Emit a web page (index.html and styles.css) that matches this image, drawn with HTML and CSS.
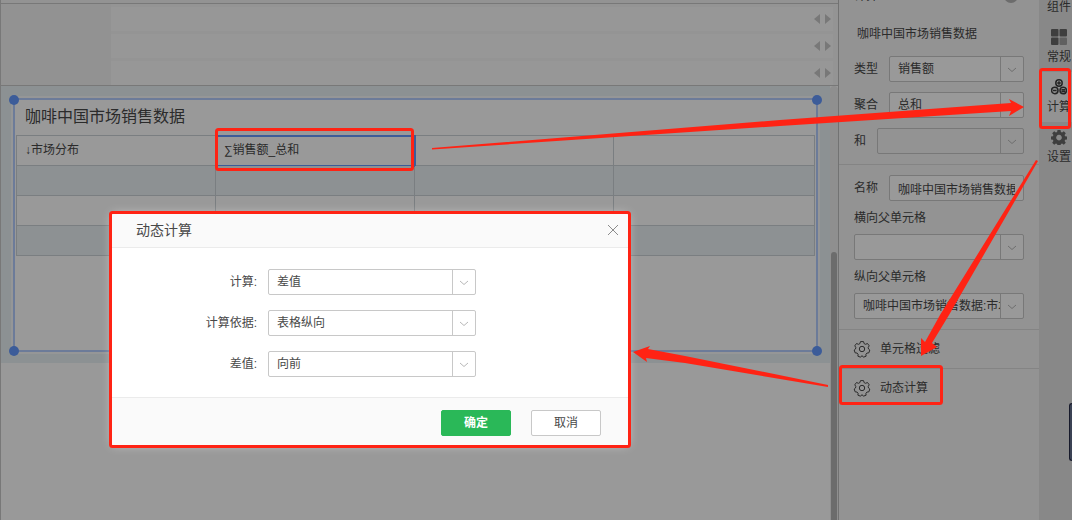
FILE: index.html
```
<!DOCTYPE html>
<html lang="zh-CN">
<head>
  <meta charset="UTF-8" />
  <meta name="viewport" content="width=device-width, initial-scale=1" />
  <title>动态计算</title>
  <link rel="stylesheet" href="styles.css">
</head>

<body>
  <div class="app">
    <!-- ===== DESIGN AREA ===== -->
    <main class="main">
      <div class="toolbar"></div>

      <div class="shelf">
        <div class="shelf-side"></div>
        <div class="shelf-rows">
          <div class="shelf-row"><i class="arrow-left"></i><i class="arrow-right"></i></div>
          <div class="shelf-row"><i class="arrow-left"></i><i class="arrow-right"></i></div>
          <div class="shelf-row"><i class="arrow-left"></i><i class="arrow-right"></i></div>
        </div>
      </div>

      <div class="canvas">
        <div class="sheet">
          <div class="widget">
            <i class="handle top left"></i>
            <i class="handle top right"></i>
            <i class="handle bottom left"></i>
            <i class="handle bottom right"></i>
            <div class="widget-title">咖啡中国市场销售数据</div>
            <table class="grid">
              <tr><td>↓市场分布</td><td class="selected">∑销售额_总和</td><td></td><td></td></tr>
              <tr><td></td><td></td><td></td><td></td></tr>
              <tr><td></td><td></td><td></td><td></td></tr>
              <tr><td></td><td></td><td></td><td></td></tr>
            </table>
          </div>
        </div>
        <div class="scrollbar"><div class="scroll-thumb"></div></div>
      </div>
    </main>

    <!-- ===== PROPERTY PANEL ===== -->
    <aside class="panel">
      <div class="panel-header"><span>计算</span><i class="help-dot"></i></div>

      <section class="panel-section">
        <div class="panel-name">咖啡中国市场销售数据</div>
        <div class="field">
          <label for="type">类型</label>
          <div class="select"><select id="type"><option>销售额</option></select><svg viewBox="0 0 10 6"><path d="M1 1l4 3.5L9 1" /></svg></div>
        </div>
        <div class="field">
          <label for="agg">聚合</label>
          <div class="select"><select id="agg"><option>总和</option></select><svg viewBox="0 0 10 6"><path d="M1 1l4 3.5L9 1" /></svg></div>
        </div>
        <div class="field">
          <label for="with">和</label>
          <div class="select disabled"><select id="with" disabled><option></option></select><svg viewBox="0 0 10 6"><path d="M1 1l4 3.5L9 1" /></svg></div>
        </div>
      </section>

      <section class="panel-section">
        <div class="field">
          <label for="name">名称</label>
          <input class="text-input" id="name" type="text" value="咖啡中国市场销售数据_1">
        </div>
        <div class="field-stack">
          <label for="hparent">横向父单元格</label>
          <div class="select"><select id="hparent"><option></option></select><svg viewBox="0 0 10 6"><path d="M1 1l4 3.5L9 1" /></svg></div>
        </div>
        <div class="field-stack">
          <label for="vparent">纵向父单元格</label>
          <div class="select"><select id="vparent"><option>咖啡中国市场销售数据:市场分布</option></select><svg viewBox="0 0 10 6"><path d="M1 1l4 3.5L9 1" /></svg></div>
        </div>
      </section>

      <button class="panel-link" type="button">
        <svg viewBox="0 0 16 16"><path d="M6.500 .6h3l.7 2.100 1.300.6 2-.8 1.700 2.300-1 1.700.3 1.500 1.300 1-.9 2.800-2 .3-1 1.100.2 2-2.700 1L8 14.600l-1.400 1.600-2.700-1 .2-2-1-1.100-2-.3L.2 9l1.300-1 .3-1.500-1-1.700 1.700-2.300 2 .8 1.300-.6z" /><circle cx="8" cy="8" r="2.700" /></svg>
        单元格过滤
      </button>
      <button class="panel-link" type="button">
        <svg viewBox="0 0 16 16"><path d="M6.500 .6h3l.7 2.100 1.300.6 2-.8 1.700 2.300-1 1.700.3 1.500 1.300 1-.9 2.800-2 .3-1 1.100.2 2-2.700 1L8 14.600l-1.400 1.600-2.700-1 .2-2-1-1.100-2-.3L.2 9l1.300-1 .3-1.500-1-1.700 1.700-2.300 2 .8 1.300-.6z" /><circle cx="8" cy="8" r="2.700" /></svg>
        动态计算
      </button>
    </aside>

    <!-- ===== TAB RAIL ===== -->
    <nav class="rail">
      <button class="rail-tab" type="button">
        <svg viewBox="0 0 16 16"><rect x="1" y="1" width="14" height="14" /></svg>
        组件
      </button>
      <button class="rail-tab" type="button">
        <svg viewBox="0 0 16 16"><rect x="0" y="0" width="7.500" height="7.500" rx="1" /><rect x="8.500" y="0" width="7.500" height="7.500" rx="1" /><rect x="0" y="8.500" width="7.500" height="7.500" rx="1" /><rect class="faint" x="8.500" y="8.500" width="7.500" height="7.500" rx="1" /></svg>
        常规
      </button>
      <button class="rail-tab active" type="button">
        <svg viewBox="0 0 16 16"><circle cx="8" cy="4" r="3.200" /><circle cx="3.800" cy="11.500" r="3.200" /><circle cx="12.200" cy="11.500" r="3.200" /><path d="M6.200 4h3.600M8 2.200v3.600M2 11.500h3.600M10.400 10.700h3.600M10.400 12.500h3.600" /></svg>
        计算
      </button>
      <button class="rail-tab" type="button">
        <svg viewBox="0 0 16 16"><path fill-rule="evenodd" d="M6.500 1h3l.4 2 1.200.5 1.700-1.200 2 2-1.200 1.700.5 1.200 1.900.3v2.900l-1.900.4-.5 1.200 1.200 1.700-2 2-1.700-1.200-1.200.5-.4 2h-3l-.4-2-1.200-.5-1.700 1.200-2-2 1.200-1.700-.5-1.200L0 10.400V7.500l1.900-.3.500-1.200L1.200 4.300l2-2 1.700 1.200L6.100 3zM8 5.800a2.800 2.800 0 1 0 .01 0z" /></svg>
        设置
      </button>
    </nav>

    <div class="scrim"></div>
    <div class="dock-tab"></div>

    <!-- ===== DIALOG ===== -->
    <form class="dialog" role="dialog" aria-labelledby="dialogTitle">
      <div class="dialog-header">
        <span id="dialogTitle">动态计算</span>
        <button class="dialog-close" type="button" aria-label="关闭">
          <svg viewBox="0 0 12 12"><path d="M1 1l10 10M11 1L1 11" /></svg>
        </button>
      </div>
      <div class="dialog-body">
        <div class="dialog-row">
          <label for="calc">计算:</label>
          <div class="select"><select id="calc"><option>差值</option></select><svg viewBox="0 0 10 6"><path d="M1 1l4 3.5L9 1" /></svg></div>
        </div>
        <div class="dialog-row">
          <label for="basis">计算依据:</label>
          <div class="select"><select id="basis"><option>表格纵向</option></select><svg viewBox="0 0 10 6"><path d="M1 1l4 3.5L9 1" /></svg></div>
        </div>
        <div class="dialog-row">
          <label for="diff">差值:</label>
          <div class="select"><select id="diff"><option>向前</option></select><svg viewBox="0 0 10 6"><path d="M1 1l4 3.5L9 1" /></svg></div>
        </div>
      </div>
      <div class="dialog-footer">
        <button class="btn primary" type="button">确定</button>
        <button class="btn" type="button">取消</button>
      </div>
    </form>

    <!-- red callouts -->
    <svg class="marks" width="1072" height="520" viewBox="0 0 1072 520">
      <rect x="216.500" y="129.500" width="196" height="40" rx="2" />
      <rect x="110.500" y="212.500" width="519" height="234" rx="2" />
      <rect x="1040.500" y="69.500" width="29" height="58" rx="2" />
      <rect x="840.500" y="366.500" width="101" height="37" rx="2" />
      <path d="M432 148L780 120L1011 103L1009 99L1024 107L1009 116L1011 111L780 126L432 149.500Z" />
      <path d="M1036 160L1038 161L949 315L932 343L937 347L921 356L921 338L925 342L940 315Z" />
      <path d="M828 385L685 356L648 349L650 346L633 352L647 362L646 358L685 363L828 387Z" />
    </svg>
  </div>
</body>
</html>
```
FILE: styles.css
```
:root {
  --text: #484848;
  --line: #c8c8c8;
  --red: #ff2314;
  --blue: #6499ff;
  --green: #2ab858;
}

/* reset + base */
* {
  margin: 0;
  padding: 0;
  box-sizing: border-box;
}
body {
  font-family: "Liberation Sans", "Noto Sans CJK SC", sans-serif;
  font-size: 12px;
  line-height: 16px;
  color: var(--text);
}
button,
input,
select {
  font: inherit;
  color: inherit;
}
button {
  border: none;
  background: none;
  cursor: pointer;
}
.app {
  position: relative;
  display: flex;
  height: 100vh;
  overflow: hidden;
}

/* design area */
.main {
  flex: 1;
  min-width: 0;
  display: flex;
  flex-direction: column;
  border-left: 1px solid var(--line);
  border-right: 1px solid #bebebe;
  background: #ffffff;
}
.toolbar {
  height: 4px;
  background: #f5f5f5;
  border-bottom: 1px solid var(--line);
}
.shelf {
  display: flex;
  padding-right: 5px;
  background: #f7f7f7;
  border-bottom: 1px solid var(--line);
}
.shelf-side {
  width: 110px;
  background: #f4f4f4;
}
.shelf-rows {
  flex: 1;
  display: flex;
  flex-direction: column;
  gap: 3px;
  padding-top: 3px;
}
.shelf-row {
  display: flex;
  align-items: center;
  justify-content: flex-end;
  gap: 5px;
  height: 24px;
  padding-right: 2px;
  background: #fcfcfc;
}
.arrow-left,
.arrow-right {
  border: 5px solid transparent;
}
.arrow-left {
  border-left: none;
  border-right: 6px solid #c8c8c8;
}
.arrow-right {
  border-right: none;
  border-left: 6px solid #c8c8c8;
}

/* canvas */
.canvas {
  flex: 1;
  display: flex;
  align-items: flex-start;
}
.sheet {
  flex: 1;
  padding: 12px 12px 11px;
  background: #e9f2f6;
}
.widget {
  position: relative;
  height: 254px;
  padding: 0 1px;
  background: #ffffff;
  border: 2px solid #b4cdff;
  box-shadow: 0 0 0 2px #f8fafc;
}
.widget-title {
  height: 35px;
  padding-left: 9px;
  font-size: 16px;
  line-height: 34px;
}
.handle {
  position: absolute;
  width: 10px;
  height: 10px;
  border-radius: 50%;
  background: var(--blue);
}
.handle.top { top: -5px; }
.handle.bottom { bottom: -6px; }
.handle.left { left: -6px; }
.handle.right { right: -6px; }

.grid {
  width: 100%;
  table-layout: fixed;
  border-collapse: collapse;
}
.grid td {
  position: relative;
  height: 30px;
  padding: 0 8px 2px;
  border: 1px solid #cbd3d8;
}
.grid td:not(:last-child) {
  width: 199px;
}
.grid tr:nth-child(even) td {
  background: #ebf2f6;
}
.grid .selected::after {
  content: "";
  position: absolute;
  inset: -1px -2px -2px -1px;
  border: 2px solid var(--blue);
}

.scrollbar {
  align-self: stretch;
  width: 8px;
  padding-top: 166px;
  border-radius: 4px 4px 0 0;
  background: #eeeeee;
}
.scroll-thumb {
  width: 6px;
  height: 100%;
  margin-left: 1px;
  border-radius: 3px 3px 0 0;
  background: #b4b4b4;
}

/* property panel */
.panel {
  width: 200px;
  background: #f5f5f5;
}
.panel-header {
  display: flex;
  align-items: center;
  justify-content: space-between;
  height: 20px;
  margin-top: -14px;
  padding: 0 21px 0 15px;
}
.help-dot {
  width: 14px;
  height: 14px;
  border-radius: 50%;
  background: #b4b4b4;
}
.panel-section {
  display: flex;
  flex-direction: column;
  gap: 10px;
  padding: 10px 15px;
  border-bottom: 1px solid #dcdcdc;
}
.panel-name {
  padding: 10px 3px 4px;
}
.field {
  display: flex;
  align-items: center;
  gap: 11px;
}
.field .select,
.field .text-input {
  flex: 1;
  min-width: 0;
}
.field-stack {
  display: flex;
  flex-direction: column;
  gap: 8px;
}
.field-stack label {
  line-height: 15px;
}
.text-input {
  height: 26px;
  padding: 0 8px;
  border: 1px solid var(--line);
  border-radius: 2px;
  background: #ffffff;
}
.panel-link {
  display: flex;
  align-items: center;
  gap: 10px;
  width: 100%;
  height: 38px;
  padding-left: 15px;
}
.panel-link + .panel-link {
  border-top: 1px solid #dcdcdc;
}
.panel-link svg {
  width: 16px;
  height: 16px;
  overflow: visible;
  fill: none;
  stroke: var(--text);
  stroke-linejoin: round;
}

/* drop-downs */
.select {
  position: relative;
  border: 1px solid var(--line);
  border-radius: 2px;
  background: #ffffff;
}
.select select {
  display: block;
  appearance: none;
  width: calc(100% - 22px);
  height: 24px;
  padding-left: 8px;
  border: none;
  border-right: 1px solid var(--line);
  background: none;
  opacity: 1;
}
.select svg {
  position: absolute;
  right: 6px;
  top: 10px;
  width: 10px;
  height: 6px;
  fill: none;
  stroke: #b8b8b8;
}
.select.disabled {
  background: #f5f5f5;
}

/* tab rail */
.rail {
  width: 33px;
  overflow: hidden;
  background: #e3e3e3;
}
.rail-tab {
  display: flex;
  flex-direction: column;
  align-items: center;
  gap: 4px;
  width: 40px;
  height: 50px;
  padding-top: 7px;
}
.rail-tab:first-child {
  margin-top: -28px;
}
.rail-tab.active {
  background: #f5f5f5;
}
.rail-tab svg {
  flex: none;
  width: 16px;
  height: 16px;
  fill: #686868;
}
.rail-tab.active svg {
  fill: none;
  stroke: #3c3c3c;
  stroke-width: 1.5;
}
.rail-tab .faint {
  fill: #a0a0a0;
}

/* layers over the page */
.scrim {
  position: absolute;
  inset: 0;
  background: rgba(0, 0, 0, 0.4);
}
.dock-tab {
  position: absolute;
  right: 0;
  top: 403px;
  width: 3px;
  height: 58px;
  border: 1px solid #171a2b;
  border-right: none;
  border-radius: 3px 0 0 3px;
  background: #3b4254;
}
.marks {
  position: absolute;
  left: 0;
  top: 0;
  pointer-events: none;
}
.marks rect {
  fill: none;
  stroke: var(--red);
  stroke-width: 3;
}
.marks path {
  fill: var(--red);
}

/* dialog */
.dialog {
  position: absolute;
  left: 112px;
  top: 214px;
  width: 516px;
  background: #ffffff;
  box-shadow: 0 0 10px rgba(255, 255, 255, 0.5);
}
.dialog-header {
  display: flex;
  align-items: center;
  justify-content: space-between;
  height: 34px;
  padding: 0 9px 2px 24px;
  background: #fafafa;
  border-bottom: 1px solid #ebebeb;
  font-size: 14px;
}
.dialog-close {
  display: flex;
}
.dialog-close svg {
  width: 12px;
  height: 12px;
  fill: none;
  stroke: #8c8c8c;
}
.dialog-body {
  display: flex;
  flex-direction: column;
  gap: 15px;
  padding: 21px 0 20px;
}
.dialog-row {
  display: flex;
  align-items: center;
  gap: 11px;
}
.dialog-row label {
  width: 145px;
  text-align: right;
}
.dialog-row .select {
  width: 208px;
}
.dialog-footer {
  display: flex;
  justify-content: flex-end;
  gap: 20px;
  padding: 12px 27px 9px;
  background: #fafafa;
  border-top: 1px solid #ebebeb;
}
.btn {
  width: 70px;
  height: 26px;
  border: 1px solid #c8c8c8;
  border-radius: 2px;
  background: #ffffff;
}
.btn.primary {
  border-color: var(--green);
  background: var(--green);
  color: #ffffff;
  font-weight: 700;
}
```
